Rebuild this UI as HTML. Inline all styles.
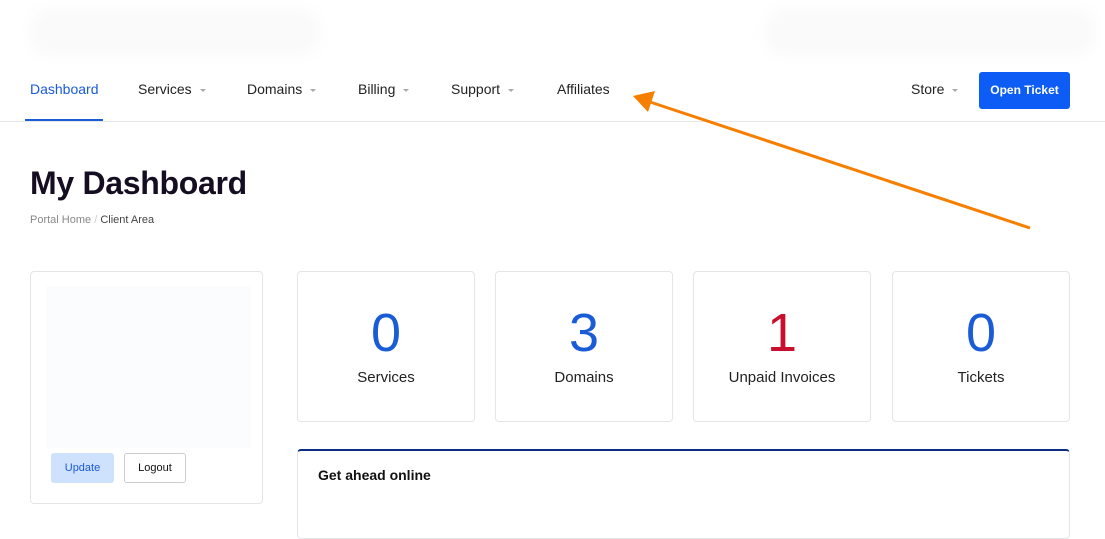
<!DOCTYPE html>
<html><head><style>
*{box-sizing:border-box;margin:0;padding:0}
body{width:1105px;height:525px;overflow:hidden;background:#fff;font-family:"Liberation Sans",sans-serif;position:relative;color:#1a1a2e}
.nav a{position:absolute;top:81px;font-size:14px;color:#222;text-decoration:none}
.car{display:inline-block;width:0;height:0;border-left:3px solid transparent;border-right:3px solid transparent;border-top:3px solid #aaa;margin-left:8px;vertical-align:middle}
.hr{position:absolute;top:121px;left:0;width:1105px;height:1px;background:#e5e7eb}
.card{position:absolute;border:1px solid #e3e5e8;border-radius:4px;background:#fff}
.stat{top:271px;width:178px;height:151px;text-align:center}
.stat .n{font-size:54px;color:#1a5bd6;margin-top:34px;line-height:1;font-weight:normal}
.stat .l{font-size:15px;color:#222;margin-top:9px}
</style></head><body>
<div style="position:absolute;left:30px;top:8px;width:290px;height:48px;background:#fafafa;border-radius:20px;filter:blur(6px)"></div>
<div style="position:absolute;left:765px;top:8px;width:330px;height:48px;background:#fafafa;border-radius:20px;filter:blur(6px)"></div>
<div class="nav">
<a style="left:30px;color:#1a5bd6">Dashboard</a>
<a style="left:138px">Services<span class="car"></span></a>
<a style="left:247px">Domains<span class="car"></span></a>
<a style="left:358px">Billing<span class="car"></span></a>
<a style="left:451px">Support<span class="car"></span></a>
<a style="left:557px">Affiliates</a>
<a style="left:911px">Store<span class="car"></span></a>
</div>
<div style="position:absolute;left:979px;top:72px;width:91px;height:37px;background:#0d5cf6;border-radius:3px;color:#fff;font-size:12px;font-weight:bold;text-align:center;line-height:37px">Open Ticket</div>
<div style="position:absolute;left:25px;top:119px;width:78px;height:3px;background:#1a5bd6"></div>
<div class="hr"></div>
<div style="position:absolute;left:30px;top:165px;font-size:32px;font-weight:bold;color:#150d22;letter-spacing:-0.3px">My Dashboard</div>
<div style="position:absolute;left:30px;top:214px;font-size:11px;color:#888">Portal Home <span style="color:#ccc">/</span> <span style="color:#444">Client Area</span></div>
<div class="card" style="left:30px;top:271px;width:233px;height:233px">
<div style="position:absolute;left:15px;top:14px;width:205px;height:162px;background:#fbfcfd"></div>
<div style="position:absolute;left:20px;top:181px;width:63px;height:30px;background:#cfe2fd;border-radius:3px;color:#1a5bd6;font-size:11px;text-align:center;line-height:30px">Update</div>
<div style="position:absolute;left:93px;top:181px;width:62px;height:30px;border:1px solid #ccc;border-radius:3px;font-size:11px;text-align:center;line-height:28px;color:#111">Logout</div>
</div>
<div class="card stat" style="left:297px"><div class="n">0</div><div class="l">Services</div></div>
<div class="card stat" style="left:495px"><div class="n">3</div><div class="l">Domains</div></div>
<div class="card stat" style="left:693px"><div class="n" style="color:#c8102e">1</div><div class="l">Unpaid Invoices</div></div>
<div class="card stat" style="left:892px"><div class="n">0</div><div class="l">Tickets</div></div>
<div class="card" style="left:297px;top:449px;width:773px;height:90px;border-top:2px solid #0a2d82">
<div style="position:absolute;left:20px;top:16px;font-size:14px;font-weight:bold;color:#111">Get ahead online</div></div>
<svg style="position:absolute;left:0;top:0" width="1105" height="525"><line x1="1030" y1="228" x2="650" y2="102" stroke="#f77f00" stroke-width="3"/><polygon points="633,96 655,91 648,112" fill="#f77f00"/></svg>
</body></html>
